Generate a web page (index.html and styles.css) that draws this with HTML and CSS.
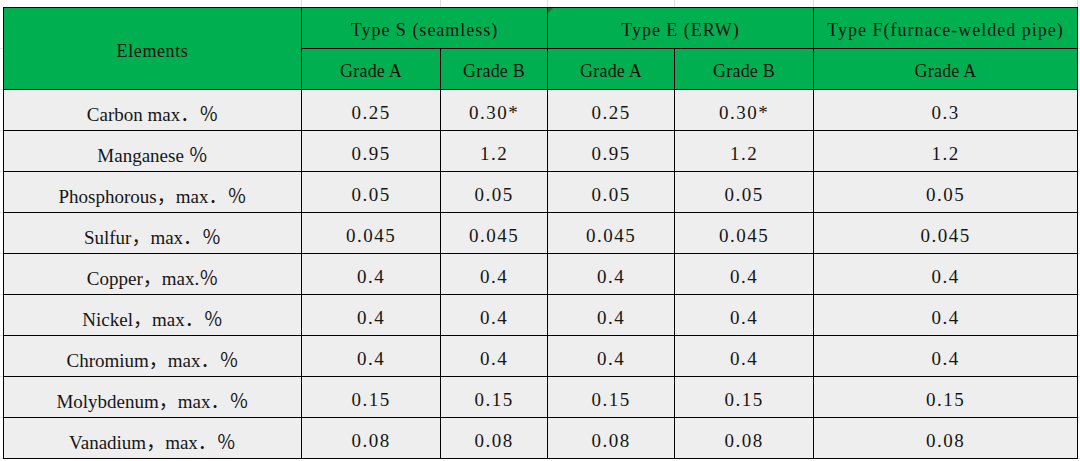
FILE: index.html
```html
<!DOCTYPE html>
<html lang="en">
<head>
<meta charset="utf-8">
<title>Chemical composition</title>
<link rel="stylesheet" href="styles.css">
</head>
<body>
<div class="strip"><span></span><span></span><span></span><span></span><span></span><span></span></div>
<div class="tbl">
  <div class="c h el">Elements</div>
  <div class="c h s2">Type S (seamless)</div>
  <div class="c h s2 flag">Type E (ERW)</div>
  <div class="c h">Type F(furnace-welded pipe)</div>
  <div class="c h g">Grade A</div>
  <div class="c h g">Grade B</div>
  <div class="c h g">Grade A</div>
  <div class="c h g">Grade B</div>
  <div class="c h g">Grade A</div>

  <div class="c lbl">Carbon max．％</div>
  <div class="c">0.25</div><div class="c">0.30*</div><div class="c">0.25</div><div class="c">0.30*</div><div class="c">0.3</div>

  <div class="c lbl">Manganese ％</div>
  <div class="c">0.95</div><div class="c">1.2</div><div class="c">0.95</div><div class="c">1.2</div><div class="c">1.2</div>

  <div class="c lbl">Phosphorous，max．％</div>
  <div class="c">0.05</div><div class="c">0.05</div><div class="c">0.05</div><div class="c">0.05</div><div class="c">0.05</div>

  <div class="c lbl">Sulfur，max．％</div>
  <div class="c">0.045</div><div class="c">0.045</div><div class="c">0.045</div><div class="c">0.045</div><div class="c">0.045</div>

  <div class="c lbl">Copper，max.％</div>
  <div class="c">0.4</div><div class="c">0.4</div><div class="c">0.4</div><div class="c">0.4</div><div class="c">0.4</div>

  <div class="c lbl">Nickel，max．％</div>
  <div class="c">0.4</div><div class="c">0.4</div><div class="c">0.4</div><div class="c">0.4</div><div class="c">0.4</div>

  <div class="c lbl">Chromium，max．％</div>
  <div class="c">0.4</div><div class="c">0.4</div><div class="c">0.4</div><div class="c">0.4</div><div class="c">0.4</div>

  <div class="c lbl">Molybdenum，max．％</div>
  <div class="c">0.15</div><div class="c">0.15</div><div class="c">0.15</div><div class="c">0.15</div><div class="c">0.15</div>

  <div class="c lbl">Vanadium，max．％</div>
  <div class="c">0.08</div><div class="c">0.08</div><div class="c">0.08</div><div class="c">0.08</div><div class="c">0.08</div>
</div>
</body>
</html>
```

FILE: styles.css
```css
html, body {
  margin: 0;
  padding: 0;
}
body {
  width: 1080px;
  height: 461px;
  overflow: hidden;
  background-color: #fff;
  background-image: repeating-linear-gradient(to bottom, transparent 0, transparent 40px, #e2e2e2 40px, #e2e2e2 41px);
  background-position: 0 8px;
  font-family: "Liberation Serif", "Noto Sans CJK SC", serif;
  color: #161616;
}
.strip {
  display: grid;
  grid-template-columns: 302px 139px 107px 127px 139px 264px;
  height: 7px;
  background: #fff;
}
.strip span {
  border-right: 1px solid #dedede;
}
.tbl {
  display: grid;
  grid-template-columns: 298px 139px 107px 127px 139px 264px;
  grid-auto-rows: 41px;
  width: max-content;
  margin-left: 3px;
  border-left: 1px solid #000;
  border-top: 1px solid #000;
}
.c {
  box-sizing: border-box;
  border-right: 1px solid #000;
  border-bottom: 1px solid #000;
  display: flex;
  align-items: center;
  justify-content: center;
  padding-top: 5px;
  background: #eeeeee;
  font-size: 19px;
  letter-spacing: 1.5px;
  white-space: nowrap;
}
.lbl {
  letter-spacing: 0;
}
.h {
  background: #00b050;
  font-size: 18px;
  letter-spacing: 1px;
  color: #111;
}
.h.g {
  letter-spacing: 0.2px;
}
.el {
  grid-row: span 2;
  letter-spacing: 0.6px;
}
.s2 {
  grid-column: span 2;
}
.flag {
  position: relative;
}
.flag::before {
  content: "";
  position: absolute;
  left: 0;
  top: 0;
  border-top: 5px solid #236b2c;
  border-right: 5px solid transparent;
}
```
